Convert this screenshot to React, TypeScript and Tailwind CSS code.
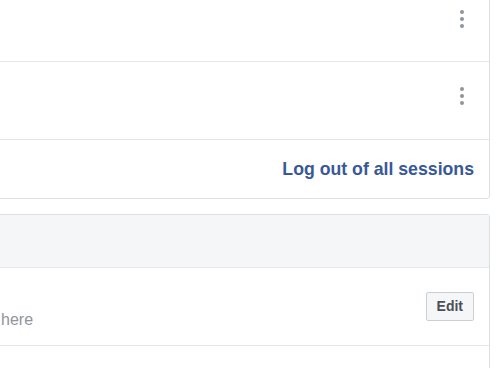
import React from "react";

function Dots() {
  return (
    <div className="flex flex-col items-center gap-[3px]">
      <span className="block h-[4px] w-[4px] rounded-full bg-[#90949c]" />
      <span className="block h-[4px] w-[4px] rounded-full bg-[#90949c]" />
      <span className="block h-[4px] w-[4px] rounded-full bg-[#90949c]" />
    </div>
  );
}

export default function App() {
  return (
    <div
      className="relative h-[368px] w-[500px] overflow-hidden bg-white"
      style={{ fontFamily: '"Liberation Sans", Arial, Helvetica, sans-serif' }}
    >
      <div className="-ml-[20px] -mt-[16px] w-[510px]">
        {/* Card 1 */}
        <div className="rounded-[3px] border border-[#dddfe2] bg-white">
          <div className="flex h-[77px] items-start justify-end border-b border-[#e5e6e9] pr-[25px] pt-[25px]">
            <Dots />
          </div>
          <div className="flex h-[78px] items-start justify-end border-b border-[#e5e6e9] pr-[25px] pt-[25px]">
            <Dots />
          </div>
          <div className="flex h-[58px] items-center justify-end pr-[15px]">
            <span className="text-[17.7px] font-bold leading-[22px] text-[#385898]">
              Log out of all sessions
            </span>
          </div>
        </div>

        {/* Card 2 */}
        <div className="mt-[15px] rounded-[3px] border border-[#dddfe2] bg-white">
          <div className="h-[53px] border-b border-[#e5e6e9] bg-[#f5f6f7]" />
          <div className="flex h-[78px] items-center justify-between border-b border-[#e5e6e9] pr-[15px]">
            <div className="pl-[20px] pt-[26px]">
              <span className="text-[16px] leading-[20px] text-[#90949c]">here</span>
            </div>
            <button className="h-[29px] rounded-[2px] border border-[#ccd0d5] bg-[#f5f6f7] px-[10px] text-[14px] font-bold leading-[27px] text-[#4b4f56]">
              Edit
            </button>
          </div>
          <div className="h-[60px]" />
        </div>
      </div>
    </div>
  );
}
